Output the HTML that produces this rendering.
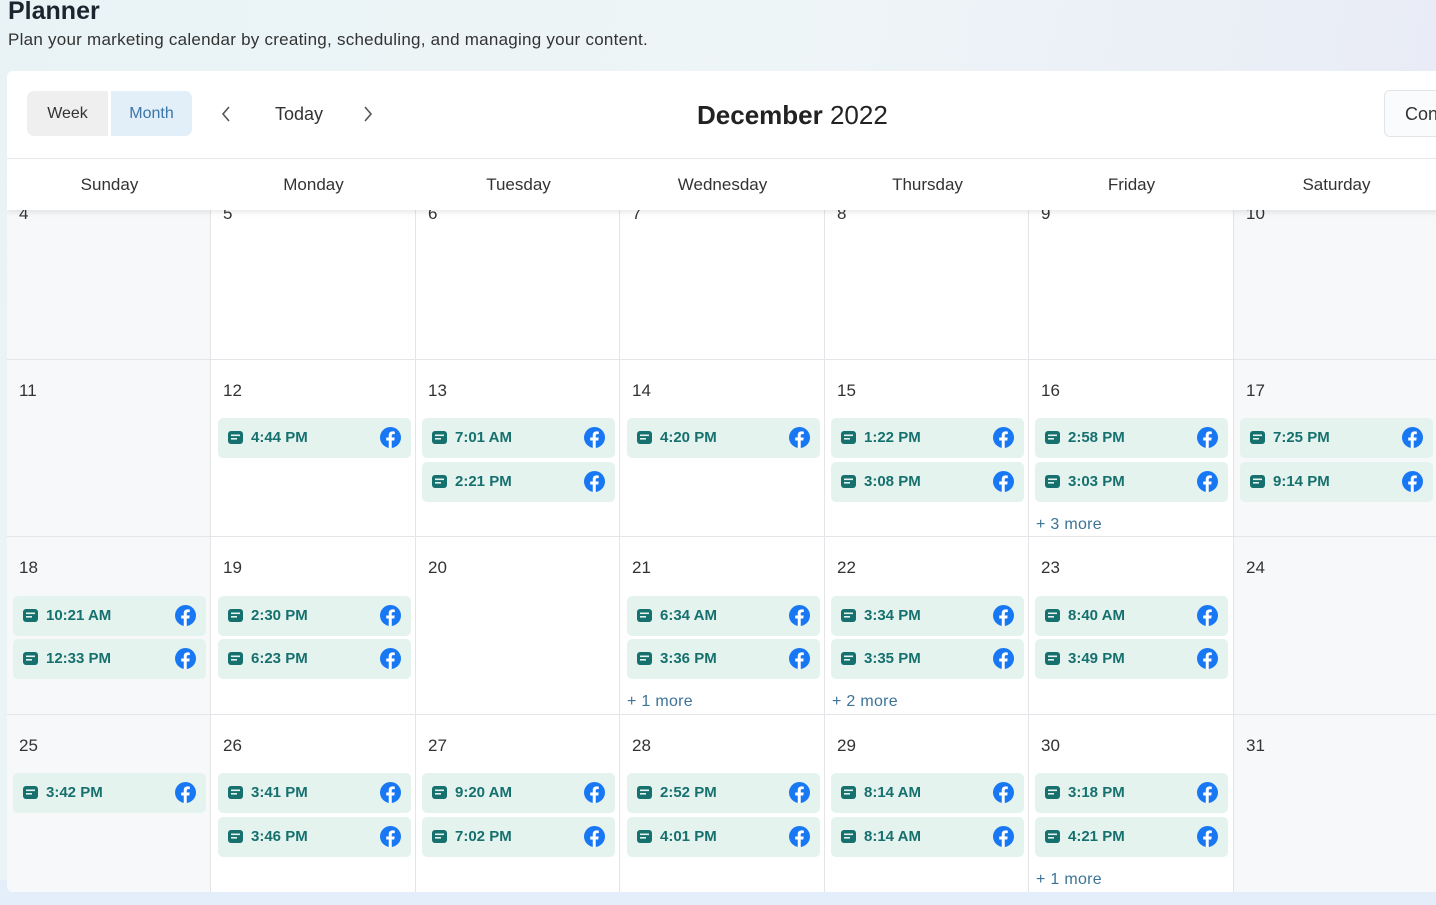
<!DOCTYPE html>
<html><head><meta charset="utf-8"><style>
*{margin:0;padding:0;box-sizing:border-box}
body{width:1436px;height:905px;overflow:hidden;font-family:"Liberation Sans",sans-serif;background:linear-gradient(100deg,#e9f3f5 0%,#eef5f7 50%,#e8eaf6 100%);position:relative;color:#222}
.bot{position:absolute;left:0;top:880px;width:1436px;height:25px;background:#e4eefb}
h1{position:absolute;left:8px;top:-3px;font-size:25px;font-weight:bold;color:#1c2430}
.sub{position:absolute;left:8px;top:30px;font-size:17px;letter-spacing:0.25px;color:#333;white-space:nowrap}
.card{position:absolute;left:7px;top:71px;width:1440px;height:821px;background:#fff;border-radius:6px;overflow:hidden}
.tog{position:absolute;left:20px;top:20px;height:45px;display:flex;border-radius:7px;overflow:hidden}
.tog div{height:45px;line-height:46px;font-size:16px;text-align:center}
.nav{position:absolute;font-size:18px;color:#333}
.title{position:absolute;left:690px;top:29px;font-size:26px;color:#222;white-space:nowrap}
.con{position:absolute;left:1377px;top:19px;width:80px;height:47px;border:1px solid #e2e5e8;border-radius:6px;background:#fafbfc;font-size:18px;line-height:47px;padding-left:20px;color:#333}
.hdr{position:absolute;left:0;top:87px;width:1440px;height:52px;background:#fff;border-top:1px solid #e6e8eb;box-shadow:0 3px 5px rgba(0,0,0,.08);z-index:5}
.hdr div{position:absolute;top:1px;line-height:50px;font-size:17px;color:#333;text-align:center;width:205px}
.grid{position:absolute;left:0;top:0}
.c{position:absolute;border-right:1px solid #e3e5e8;border-bottom:1px solid #e3e5e8;background:#fff}
.w{background:#f6f8fa}
.n{position:absolute;left:12px;top:21px;font-size:17px;color:#333}
.e{position:absolute;width:193px;height:40px;background:#e5f3ef;border-radius:5px;z-index:2}
.e svg.m{position:absolute;left:10px;top:13px;width:15px;height:13px}
.e span{position:absolute;left:33px;top:11px;font-size:15px;font-weight:bold;color:#16706e}
.e svg.f{position:absolute;right:10px;top:9px;width:21px;height:21px}
.more{position:absolute;font-size:16px;color:#3d7397;z-index:2;white-space:nowrap;letter-spacing:0.3px}
.c0{left:0;width:204px}.c1{left:204px;width:205px}.c2{left:409px;width:204px}.c3{left:613px;width:205px}.c4{left:818px;width:204px}.c5{left:1022px;width:205px}.c6{left:1227px;width:220px}
.r0{top:112px;height:177px}.r1{top:289px;height:177px}.r2{top:466px;height:178px}.r3{top:644px;height:178px}
</style></head><body>
<div class="bot"></div>
<svg width="0" height="0" style="position:absolute"><defs>
<symbol id="m" viewBox="0 0 15 13"><rect x="0" y="0" width="15" height="13" rx="3" fill="#16706e"/><rect x="3" y="3.5" width="9" height="1.6" fill="#e5f3ef"/><rect x="3" y="7" width="6" height="1.6" fill="#e5f3ef"/></symbol>
<symbol id="f" viewBox="0 0 24 24"><circle cx="12" cy="12" r="12" fill="#1877f2"/><path d="M13.4 24v-8.6h2.9l.5-3.4h-3.4V9.9c0-1 .4-1.7 1.8-1.7h1.7V5.2c-.3 0-1.4-.2-2.6-.2-2.6 0-4.3 1.6-4.3 4.4V12H7.1v3.4H10V24z" fill="#fff"/></symbol>
</defs></svg>
<h1>Planner</h1>
<div class="sub">Plan your marketing calendar by creating, scheduling, and managing your content.</div>
<div class="card">
<div class="tog"><div style="width:81px;background:#efefef;color:#333">Week</div><div style="width:3px;background:#fff"></div><div style="width:81px;background:#e2eef8;color:#3a76a8">Month</div></div>
<svg style="position:absolute;left:213px;top:34px" width="12" height="18" viewBox="0 0 12 18"><path d="M9 2L3 9l6 7" fill="none" stroke="#555" stroke-width="1.6"/></svg>
<div class="nav" style="left:268px;top:33px">Today</div>
<svg style="position:absolute;left:355px;top:34px" width="12" height="18" viewBox="0 0 12 18"><path d="M3 2l6 7-6 7" fill="none" stroke="#555" stroke-width="1.6"/></svg>
<div class="title"><b>December</b> 2022</div>
<div class="con">Con</div>
<div class="hdr">
<div style="left:0">Sunday</div><div style="left:204px">Monday</div><div style="left:409px">Tuesday</div><div style="left:613px">Wednesday</div><div style="left:818px">Thursday</div><div style="left:1022px">Friday</div><div style="left:1227px">Saturday</div>
</div>
<div class="grid">
<div class="c w c0 r0"><div class="n">4</div></div>
<div class="c c1 r0"><div class="n">5</div></div>
<div class="c c2 r0"><div class="n">6</div></div>
<div class="c c3 r0"><div class="n">7</div></div>
<div class="c c4 r0"><div class="n">8</div></div>
<div class="c c5 r0"><div class="n">9</div></div>
<div class="c w c6 r0"><div class="n">10</div></div>
<div class="c w c0 r1"><div class="n">11</div></div>
<div class="c c1 r1"><div class="n">12</div></div>
<div class="c c2 r1"><div class="n">13</div></div>
<div class="c c3 r1"><div class="n">14</div></div>
<div class="c c4 r1"><div class="n">15</div></div>
<div class="c c5 r1"><div class="n">16</div></div>
<div class="c w c6 r1"><div class="n">17</div></div>
<div class="c w c0 r2"><div class="n">18</div></div>
<div class="c c1 r2"><div class="n">19</div></div>
<div class="c c2 r2"><div class="n">20</div></div>
<div class="c c3 r2"><div class="n">21</div></div>
<div class="c c4 r2"><div class="n">22</div></div>
<div class="c c5 r2"><div class="n">23</div></div>
<div class="c w c6 r2"><div class="n">24</div></div>
<div class="c w c0 r3"><div class="n">25</div></div>
<div class="c c1 r3"><div class="n">26</div></div>
<div class="c c2 r3"><div class="n">27</div></div>
<div class="c c3 r3"><div class="n">28</div></div>
<div class="c c4 r3"><div class="n">29</div></div>
<div class="c c5 r3"><div class="n">30</div></div>
<div class="c w c6 r3"><div class="n">31</div></div>

<div class="e" style="left:211px;top:347px"><svg class="m"><use href="#m"/></svg><span>4:44 PM</span><svg class="f"><use href="#f"/></svg></div>
<div class="e" style="left:415px;top:347px"><svg class="m"><use href="#m"/></svg><span>7:01 AM</span><svg class="f"><use href="#f"/></svg></div>
<div class="e" style="left:415px;top:391px"><svg class="m"><use href="#m"/></svg><span>2:21 PM</span><svg class="f"><use href="#f"/></svg></div>
<div class="e" style="left:620px;top:347px"><svg class="m"><use href="#m"/></svg><span>4:20 PM</span><svg class="f"><use href="#f"/></svg></div>
<div class="e" style="left:824px;top:347px"><svg class="m"><use href="#m"/></svg><span>1:22 PM</span><svg class="f"><use href="#f"/></svg></div>
<div class="e" style="left:824px;top:391px"><svg class="m"><use href="#m"/></svg><span>3:08 PM</span><svg class="f"><use href="#f"/></svg></div>
<div class="e" style="left:1028px;top:347px"><svg class="m"><use href="#m"/></svg><span>2:58 PM</span><svg class="f"><use href="#f"/></svg></div>
<div class="e" style="left:1028px;top:391px"><svg class="m"><use href="#m"/></svg><span>3:03 PM</span><svg class="f"><use href="#f"/></svg></div>
<div class="more" style="left:1029px;top:445px">+ 3 more</div>
<div class="e" style="left:1233px;top:347px"><svg class="m"><use href="#m"/></svg><span>7:25 PM</span><svg class="f"><use href="#f"/></svg></div>
<div class="e" style="left:1233px;top:391px"><svg class="m"><use href="#m"/></svg><span>9:14 PM</span><svg class="f"><use href="#f"/></svg></div>

<div class="e" style="left:6px;top:525px"><svg class="m"><use href="#m"/></svg><span>10:21 AM</span><svg class="f"><use href="#f"/></svg></div>
<div class="e" style="left:6px;top:568px"><svg class="m"><use href="#m"/></svg><span>12:33 PM</span><svg class="f"><use href="#f"/></svg></div>
<div class="e" style="left:211px;top:525px"><svg class="m"><use href="#m"/></svg><span>2:30 PM</span><svg class="f"><use href="#f"/></svg></div>
<div class="e" style="left:211px;top:568px"><svg class="m"><use href="#m"/></svg><span>6:23 PM</span><svg class="f"><use href="#f"/></svg></div>
<div class="e" style="left:620px;top:525px"><svg class="m"><use href="#m"/></svg><span>6:34 AM</span><svg class="f"><use href="#f"/></svg></div>
<div class="e" style="left:620px;top:568px"><svg class="m"><use href="#m"/></svg><span>3:36 PM</span><svg class="f"><use href="#f"/></svg></div>
<div class="more" style="left:620px;top:622px">+ 1 more</div>
<div class="e" style="left:824px;top:525px"><svg class="m"><use href="#m"/></svg><span>3:34 PM</span><svg class="f"><use href="#f"/></svg></div>
<div class="e" style="left:824px;top:568px"><svg class="m"><use href="#m"/></svg><span>3:35 PM</span><svg class="f"><use href="#f"/></svg></div>
<div class="more" style="left:825px;top:622px">+ 2 more</div>
<div class="e" style="left:1028px;top:525px"><svg class="m"><use href="#m"/></svg><span>8:40 AM</span><svg class="f"><use href="#f"/></svg></div>
<div class="e" style="left:1028px;top:568px"><svg class="m"><use href="#m"/></svg><span>3:49 PM</span><svg class="f"><use href="#f"/></svg></div>

<div class="e" style="left:6px;top:702px"><svg class="m"><use href="#m"/></svg><span>3:42 PM</span><svg class="f"><use href="#f"/></svg></div>
<div class="e" style="left:211px;top:702px"><svg class="m"><use href="#m"/></svg><span>3:41 PM</span><svg class="f"><use href="#f"/></svg></div>
<div class="e" style="left:211px;top:746px"><svg class="m"><use href="#m"/></svg><span>3:46 PM</span><svg class="f"><use href="#f"/></svg></div>
<div class="e" style="left:415px;top:702px"><svg class="m"><use href="#m"/></svg><span>9:20 AM</span><svg class="f"><use href="#f"/></svg></div>
<div class="e" style="left:415px;top:746px"><svg class="m"><use href="#m"/></svg><span>7:02 PM</span><svg class="f"><use href="#f"/></svg></div>
<div class="e" style="left:620px;top:702px"><svg class="m"><use href="#m"/></svg><span>2:52 PM</span><svg class="f"><use href="#f"/></svg></div>
<div class="e" style="left:620px;top:746px"><svg class="m"><use href="#m"/></svg><span>4:01 PM</span><svg class="f"><use href="#f"/></svg></div>
<div class="e" style="left:824px;top:702px"><svg class="m"><use href="#m"/></svg><span>8:14 AM</span><svg class="f"><use href="#f"/></svg></div>
<div class="e" style="left:824px;top:746px"><svg class="m"><use href="#m"/></svg><span>8:14 AM</span><svg class="f"><use href="#f"/></svg></div>
<div class="e" style="left:1028px;top:702px"><svg class="m"><use href="#m"/></svg><span>3:18 PM</span><svg class="f"><use href="#f"/></svg></div>
<div class="e" style="left:1028px;top:746px"><svg class="m"><use href="#m"/></svg><span>4:21 PM</span><svg class="f"><use href="#f"/></svg></div>
<div class="more" style="left:1029px;top:800px">+ 1 more</div>
</div>
</div>
</body></html>
